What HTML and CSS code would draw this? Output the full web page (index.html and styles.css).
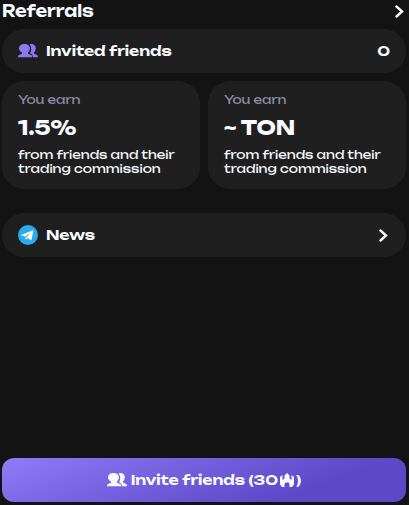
FILE: index.html
```html
<!DOCTYPE html>
<html lang="en">
<head>
  <meta charset="UTF-8" />
  <meta name="viewport" content="width=device-width, initial-scale=1.0" />
  <title>Referrals</title>
  <link rel="stylesheet" href="styles.css">
</head>

<body>
  <svg class="sprite" aria-hidden="true">
    <symbol id="friends" viewBox="0 0 20 14">
      <path d="M11.500.3C14.500-.4 17.800.8 17.800 4.200C17.800 6.200 17 7.500 16 8.400V9.600L19 11.100C19.700 11.500 20 12.300 20 13.300H15C15 11.500 14.200 10.400 13.200 9.900L12 9.300C13.700 6.800 13.600 2.500 11.500.3Z" />
      <path d="M6.400 0C10 0 12 1.900 11.900 4.600C11.800 6.500 10.900 7.800 10 8.700V9.700L13 11.100C13.800 11.500 14.200 12.300 14.200 13.300H0C0 12.300.3 11.500 1 11.100L4 9.700V8.700C2.400 7.800 1.100 6.500 1 4.600C.9 2 3.100 0 6.400 0Z" />
    </symbol>
    <symbol id="chevron" viewBox="0 0 9 13">
      <path d="M1.500 1.500L7 6.500L1.500 11.500" fill="none" stroke="currentColor" stroke-width="2.400" stroke-linecap="round" />
    </symbol>
  </svg>

  <div class="app">
    <main>
      <a class="header" href="#referrals">
        <h1>Referrals</h1>
        <svg class="chevron"><use href="#chevron" /></svg>
      </a>

      <div class="row">
        <svg class="friends"><use href="#friends" /></svg>
        <span class="row-label">Invited friends</span>
        <span>0</span>
      </div>

      <div class="cards">
        <div class="card">
          <p class="card-label">You earn</p>
          <p class="card-value">1.5%</p>
          <p class="card-note">from friends and their trading commission</p>
        </div>
        <div class="card">
          <p class="card-label">You earn</p>
          <p class="card-value">~ TON</p>
          <p class="card-note">from friends and their trading commission</p>
        </div>
      </div>

      <a class="row news" href="#news">
        <svg class="telegram" viewBox="0 0 20 20">
          <circle cx="10" cy="10" r="10" fill="#2aabee" />
          <path d="M3.800 9.800L14.300 5.600C15 5.300 15.400 5.700 15.200 6.500L13.600 14.400C13.400 15.200 12.900 15.300 12.300 14.900L9.700 13L8.400 14.300C8 14.700 7.700 14.500 7.600 14L7 11.600L3.900 10.600C3.300 10.400 3.300 10 3.800 9.800Z" fill="#fff" />
          <path d="M7.200 11.600L12.800 7.700L8.500 12L8.200 14" fill="#2aabee" />
        </svg>
        <span class="row-label">News</span>
        <svg class="chevron"><use href="#chevron" /></svg>
      </a>
    </main>

    <button class="invite" type="button">
      <svg class="friends"><use href="#friends" /></svg>
      <span class="invite-text">Invite friends (30<svg class="flame" viewBox="0 0 14 14"><path d="M0 4L2.500 2V7L4.500 5.500V2.500L7 0L9.500 2.500V5.500L11.500 7V2L14 4V11.500L12 14H9.500V11L8.500 9.500H5.500L4.500 11V14H2L0 11.500Z" /></svg>)</span>
    </button>
  </div>
</body>
</html>
```
FILE: styles.css
```css
* {
  box-sizing: border-box;
  margin: 0;
  padding: 0;
}

body {
  font-family: 'Unbounded', 'DejaVu Sans', sans-serif;
  font-weight: 600;
  font-size: 14px;
  line-height: 20px;
  background: #131313;
  color: #f7faff;
}

a {
  color: inherit;
  text-decoration: none;
}

svg {
  display: block;
  flex-shrink: 0;
  fill: currentColor;
}

.sprite {
  position: absolute;
  width: 0;
  height: 0;
}

.app {
  min-height: 100vh;
  padding: 0 3px 3px 2px;
  display: flex;
  flex-direction: column;
  justify-content: space-between;
}

main {
  display: flex;
  flex-direction: column;
  gap: 8px;
}

.header {
  display: flex;
  align-items: center;
  justify-content: space-between;
  padding: 1px 2px 0 0;
}

h1 {
  font-size: 16px;
  font-weight: 600;
}

.chevron {
  width: 9px;
  height: 13px;
}

.row {
  display: flex;
  align-items: center;
  gap: 8px;
  min-height: 44px;
  padding: 0 16px;
  border-radius: 22px;
  background: #1f1f1f;
}

.row-label {
  flex: 1;
}

.row .friends {
  color: #8c78f5;
}

.friends {
  width: 20px;
  height: 14px;
}

.cards {
  display: grid;
  grid-template-columns: 1fr 1fr;
  gap: 8px;
}

.card {
  padding: 10px 16px 13px;
  border-radius: 22px;
  background: #1f1f1f;
}

.card-label {
  font-size: 12px;
  font-weight: 400;
  line-height: 18px;
  color: #8a8ca8;
}

.card-value {
  margin: 7px 0 8px;
  font-size: 20px;
  font-weight: 700;
  line-height: 24px;
}

.card-note {
  font-size: 12px;
  font-weight: 400;
  line-height: 14px;
}

.news {
  margin-top: 16px;
  padding-right: 18px;
}

.telegram {
  width: 20px;
  height: 20px;
}

.invite {
  display: flex;
  align-items: center;
  justify-content: center;
  gap: 4px;
  min-height: 44px;
  border: none;
  border-radius: 12px;
  background: linear-gradient(160deg, #8f7af7, #5d48c7 75%);
  color: #f7faff;
  font: inherit;
  cursor: pointer;
}

.invite-text {
  display: flex;
  align-items: center;
}

.flame {
  width: 14px;
  height: 14px;
  margin: 0 2px;
}
```
